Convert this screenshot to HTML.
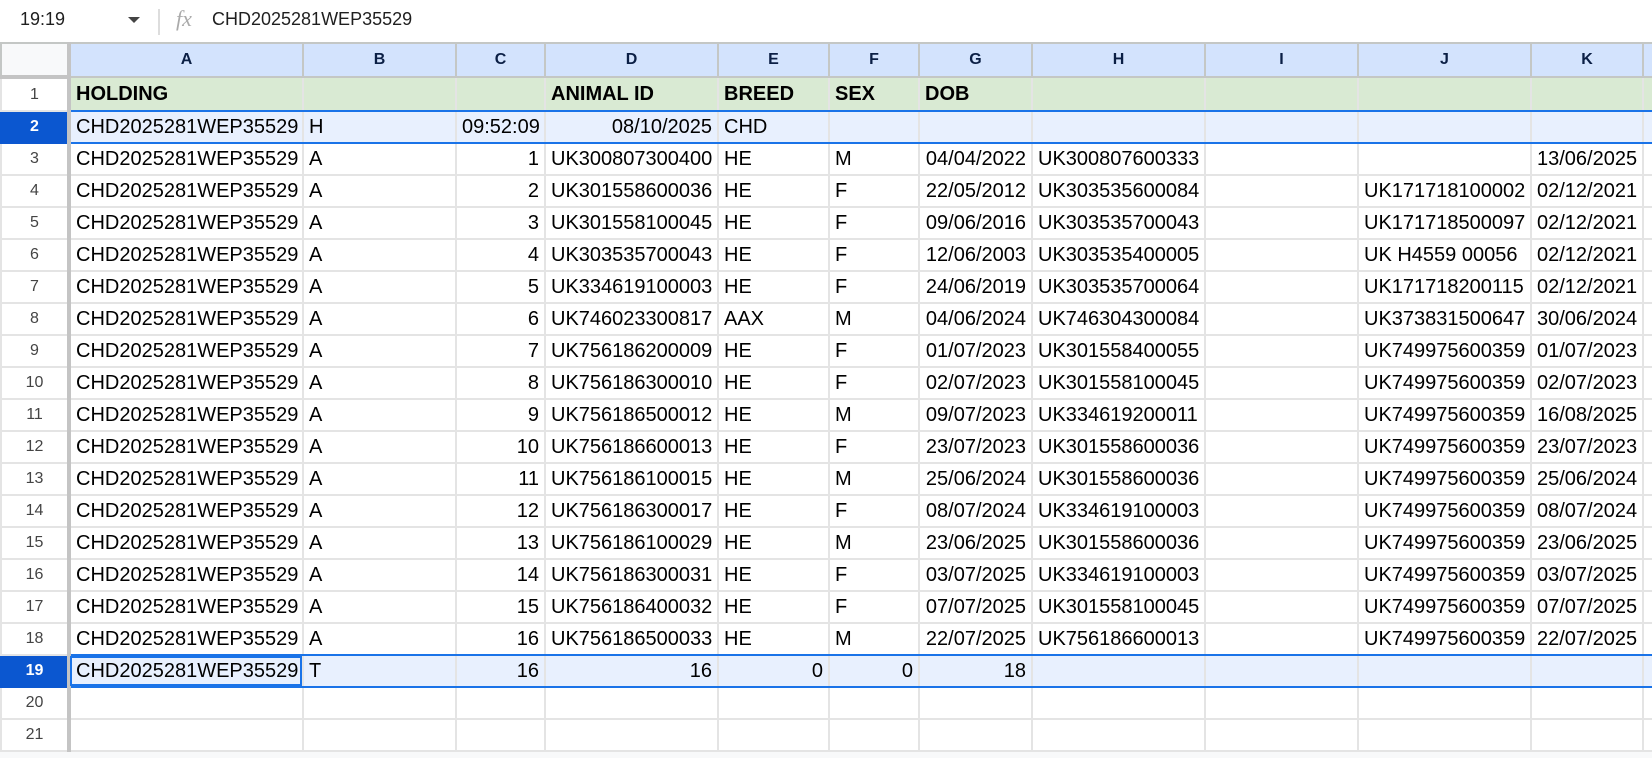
<!DOCTYPE html>
<html><head><meta charset="utf-8"><style>
*{box-sizing:border-box;margin:0;padding:0}
body{width:1652px;height:758px;overflow:hidden;background:#f8f9fa;font-family:"Liberation Sans",Arial,sans-serif;position:relative}
#bar{position:absolute;left:0;top:0;width:1652px;height:42px;background:#fff;font-size:18px;color:#1f1f1f}
#bar .nm{position:absolute;left:20px;top:9px}
#bar .tri{position:absolute;left:128px;top:17px;width:0;height:0;border-left:6px solid transparent;border-right:6px solid transparent;border-top:6px solid #444}
#bar .sep{position:absolute;left:158px;top:9px;width:2px;height:26px;background:#ddd}
#bar .fx{position:absolute;left:176px;top:6px;font-family:"Liberation Serif",serif;font-style:italic;font-size:22px;color:#aaa}
#bar .fv{position:absolute;left:212px;top:9px}
table{position:absolute;left:0;top:42px;border-collapse:collapse;table-layout:fixed;width:1652px;background:#fff}
td{border:2px solid #e4e4e4;height:32px;font-size:20px;color:#000;padding:0 5px;white-space:nowrap;overflow:hidden;line-height:28px}
td.r{text-align:right}
tr.h td{background:#d3e3fd;border-color:#c4c7c5;color:#0b1f45;font-weight:bold;font-size:16px;text-align:center;height:34px}
tr.h td.c{background:#f8f9fa;border-right:4px solid #c4c4c4;border-bottom:4px solid #c4c4c4}
td.n{background:#fff;color:#444;font-size:16px;text-align:center;border-color:#e4e4e4;border-right:4px solid #c4c4c4}
tr.g td{background:#d9ead3;font-weight:bold;height:34px;border-bottom-color:#1a73e8}
tr.g td.n{background:#fff;font-weight:normal;border-bottom-color:#e4e4e4}
tr.b td{border-bottom-color:#1a73e8}
tr.b td.n{border-bottom-color:#e4e4e4}
tr.s td{background:#e8f0fe;border-top:2px solid #1a73e8;border-bottom:2px solid #1a73e8}
tr.s td.n{background:#0b57d0;color:#fff;font-weight:bold;border-color:#0b57d0;border-right:4px solid #c4c4c4}
td.act{outline:2px solid #1a73e8;outline-offset:-3px}
</style></head><body>
<div id="bar"><span class="nm">19:19</span><span class="tri"></span><span class="sep"></span><span class="fx">fx</span><span class="fv">CHD2025281WEP35529</span></div>
<table>
<colgroup><col style="width:68px"><col style="width:234px"><col style="width:153px"><col style="width:89px"><col style="width:173px"><col style="width:111px"><col style="width:90px"><col style="width:113px"><col style="width:173px"><col style="width:153px"><col style="width:173px"><col style="width:112px"><col style="width:10px"></colgroup>
<tr class="h"><td class="c"></td><td>A</td><td>B</td><td>C</td><td>D</td><td>E</td><td>F</td><td>G</td><td>H</td><td>I</td><td>J</td><td>K</td><td></td></tr>
<tr class="g"><td class="n">1</td><td>HOLDING</td><td></td><td></td><td>ANIMAL ID</td><td>BREED</td><td>SEX</td><td>DOB</td><td></td><td></td><td></td><td></td><td></td></tr>
<tr class="s"><td class="n">2</td><td>CHD2025281WEP35529</td><td>H</td><td class="r">09:52:09</td><td class="r">08/10/2025</td><td>CHD</td><td></td><td></td><td></td><td></td><td></td><td></td><td></td></tr>
<tr><td class="n">3</td><td>CHD2025281WEP35529</td><td>A</td><td class="r">1</td><td>UK300807300400</td><td>HE</td><td>M</td><td class="r">04/04/2022</td><td>UK300807600333</td><td></td><td></td><td class="r">13/06/2025</td><td></td></tr>
<tr><td class="n">4</td><td>CHD2025281WEP35529</td><td>A</td><td class="r">2</td><td>UK301558600036</td><td>HE</td><td>F</td><td class="r">22/05/2012</td><td>UK303535600084</td><td></td><td>UK171718100002</td><td class="r">02/12/2021</td><td></td></tr>
<tr><td class="n">5</td><td>CHD2025281WEP35529</td><td>A</td><td class="r">3</td><td>UK301558100045</td><td>HE</td><td>F</td><td class="r">09/06/2016</td><td>UK303535700043</td><td></td><td>UK171718500097</td><td class="r">02/12/2021</td><td></td></tr>
<tr><td class="n">6</td><td>CHD2025281WEP35529</td><td>A</td><td class="r">4</td><td>UK303535700043</td><td>HE</td><td>F</td><td class="r">12/06/2003</td><td>UK303535400005</td><td></td><td>UK H4559 00056</td><td class="r">02/12/2021</td><td></td></tr>
<tr><td class="n">7</td><td>CHD2025281WEP35529</td><td>A</td><td class="r">5</td><td>UK334619100003</td><td>HE</td><td>F</td><td class="r">24/06/2019</td><td>UK303535700064</td><td></td><td>UK171718200115</td><td class="r">02/12/2021</td><td></td></tr>
<tr><td class="n">8</td><td>CHD2025281WEP35529</td><td>A</td><td class="r">6</td><td>UK746023300817</td><td>AAX</td><td>M</td><td class="r">04/06/2024</td><td>UK746304300084</td><td></td><td>UK373831500647</td><td class="r">30/06/2024</td><td></td></tr>
<tr><td class="n">9</td><td>CHD2025281WEP35529</td><td>A</td><td class="r">7</td><td>UK756186200009</td><td>HE</td><td>F</td><td class="r">01/07/2023</td><td>UK301558400055</td><td></td><td>UK749975600359</td><td class="r">01/07/2023</td><td></td></tr>
<tr><td class="n">10</td><td>CHD2025281WEP35529</td><td>A</td><td class="r">8</td><td>UK756186300010</td><td>HE</td><td>F</td><td class="r">02/07/2023</td><td>UK301558100045</td><td></td><td>UK749975600359</td><td class="r">02/07/2023</td><td></td></tr>
<tr><td class="n">11</td><td>CHD2025281WEP35529</td><td>A</td><td class="r">9</td><td>UK756186500012</td><td>HE</td><td>M</td><td class="r">09/07/2023</td><td>UK334619200011</td><td></td><td>UK749975600359</td><td class="r">16/08/2025</td><td></td></tr>
<tr><td class="n">12</td><td>CHD2025281WEP35529</td><td>A</td><td class="r">10</td><td>UK756186600013</td><td>HE</td><td>F</td><td class="r">23/07/2023</td><td>UK301558600036</td><td></td><td>UK749975600359</td><td class="r">23/07/2023</td><td></td></tr>
<tr><td class="n">13</td><td>CHD2025281WEP35529</td><td>A</td><td class="r">11</td><td>UK756186100015</td><td>HE</td><td>M</td><td class="r">25/06/2024</td><td>UK301558600036</td><td></td><td>UK749975600359</td><td class="r">25/06/2024</td><td></td></tr>
<tr><td class="n">14</td><td>CHD2025281WEP35529</td><td>A</td><td class="r">12</td><td>UK756186300017</td><td>HE</td><td>F</td><td class="r">08/07/2024</td><td>UK334619100003</td><td></td><td>UK749975600359</td><td class="r">08/07/2024</td><td></td></tr>
<tr><td class="n">15</td><td>CHD2025281WEP35529</td><td>A</td><td class="r">13</td><td>UK756186100029</td><td>HE</td><td>M</td><td class="r">23/06/2025</td><td>UK301558600036</td><td></td><td>UK749975600359</td><td class="r">23/06/2025</td><td></td></tr>
<tr><td class="n">16</td><td>CHD2025281WEP35529</td><td>A</td><td class="r">14</td><td>UK756186300031</td><td>HE</td><td>F</td><td class="r">03/07/2025</td><td>UK334619100003</td><td></td><td>UK749975600359</td><td class="r">03/07/2025</td><td></td></tr>
<tr><td class="n">17</td><td>CHD2025281WEP35529</td><td>A</td><td class="r">15</td><td>UK756186400032</td><td>HE</td><td>F</td><td class="r">07/07/2025</td><td>UK301558100045</td><td></td><td>UK749975600359</td><td class="r">07/07/2025</td><td></td></tr>
<tr class="b"><td class="n">18</td><td>CHD2025281WEP35529</td><td>A</td><td class="r">16</td><td>UK756186500033</td><td>HE</td><td>M</td><td class="r">22/07/2025</td><td>UK756186600013</td><td></td><td>UK749975600359</td><td class="r">22/07/2025</td><td></td></tr>
<tr class="s"><td class="n">19</td><td class="act">CHD2025281WEP35529</td><td>T</td><td class="r">16</td><td class="r">16</td><td class="r">0</td><td class="r">0</td><td class="r">18</td><td></td><td></td><td></td><td></td><td></td></tr>
<tr><td class="n">20</td><td></td><td></td><td></td><td></td><td></td><td></td><td></td><td></td><td></td><td></td><td></td><td></td></tr>
<tr><td class="n">21</td><td></td><td></td><td></td><td></td><td></td><td></td><td></td><td></td><td></td><td></td><td></td><td></td></tr>
</table>
</body></html>
